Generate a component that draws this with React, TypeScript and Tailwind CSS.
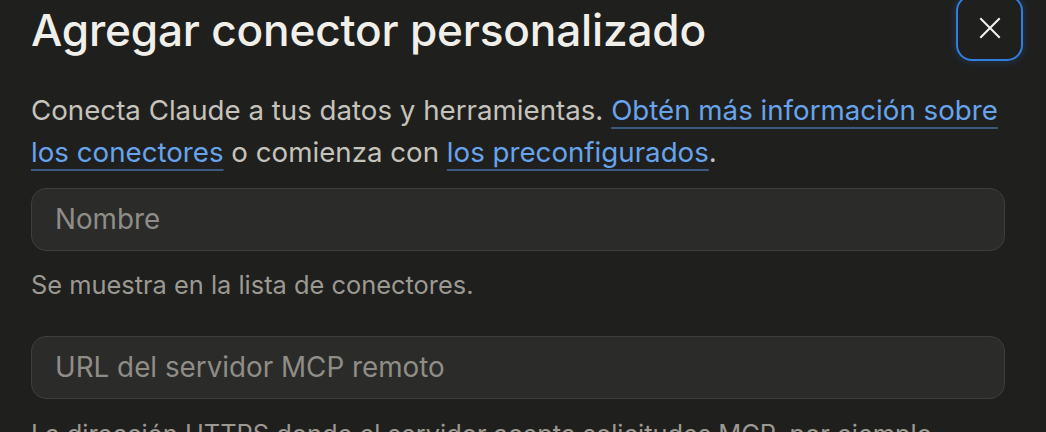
import React from "react";

function XIcon() {
  return (
    <svg width="24" height="24" viewBox="0 0 24 24" fill="none" stroke="#f3f2ee" strokeWidth="2" strokeLinecap="square">
      <path d="M3 3 L21 21 M21 3 L3 21" />
    </svg>
  );
}

export default function App() {
  const font = { fontFamily: "Inter, 'Noto Sans', sans-serif" };
  return (
    <div className="w-[1046px] h-[432px] overflow-hidden bg-[#1f1f1e]" style={font}>
      <div className="pl-[31px] pr-[23px]">
        <div className="flex items-start justify-between">
          <h1 className="mt-[4px] text-[44.2px] leading-[52px] font-medium text-[#f1efe9] tracking-[-0.2px]">
            Agregar conector personalizado
          </h1>
          <button className="-mt-[5px] w-[67px] h-[66px] rounded-[16px] border-2 border-[#2f7ee0] bg-[#1f1f1e] flex items-center justify-center shadow-[0_0_6px_2px_rgba(47,126,224,0.18)]">
            <XIcon />
          </button>
        </div>
        <p className="mt-[28px] text-[27.7px] leading-[42px] text-[#c5c3bb]">
          Conecta Claude a tus datos y herramientas.{" "}
          <a className="text-[#67a4ec] underline decoration-[#3b5a82] decoration-2 underline-offset-[7px]">
            Obtén más información sobre los conectores
          </a>{" "}
          o comienza con{" "}
          <a className="text-[#67a4ec] underline decoration-[#3b5a82] decoration-2 underline-offset-[7px]">
            los preconfigurados
          </a>
          .
        </p>
        <div className="mt-[15px] w-[974px] h-[63px] rounded-[15px] border-[1.5px] border-[#3f3e3c] bg-[#2b2b2a] flex items-center pl-[23px]">
          <span className="text-[27.8px] text-[#8f8d87]">Nombre</span>
        </div>
        <p className="mt-[17px] text-[25.4px] leading-[34px] text-[#9b9992]">Se muestra en la lista de conectores.</p>
        <div className="mt-[34px] w-[974px] h-[63px] rounded-[15px] border-[1.5px] border-[#3f3e3c] bg-[#2b2b2a] flex items-center pl-[23px]">
          <span className="text-[27.8px] text-[#8f8d87]">URL del servidor MCP remoto</span>
        </div>
        <p className="mt-[18px] text-[25.4px] leading-[34px] text-[#9b9992]">
          La dirección HTTPS donde el servidor acepta solicitudes MCP, por ejemplo
        </p>
      </div>
    </div>
  );
}
